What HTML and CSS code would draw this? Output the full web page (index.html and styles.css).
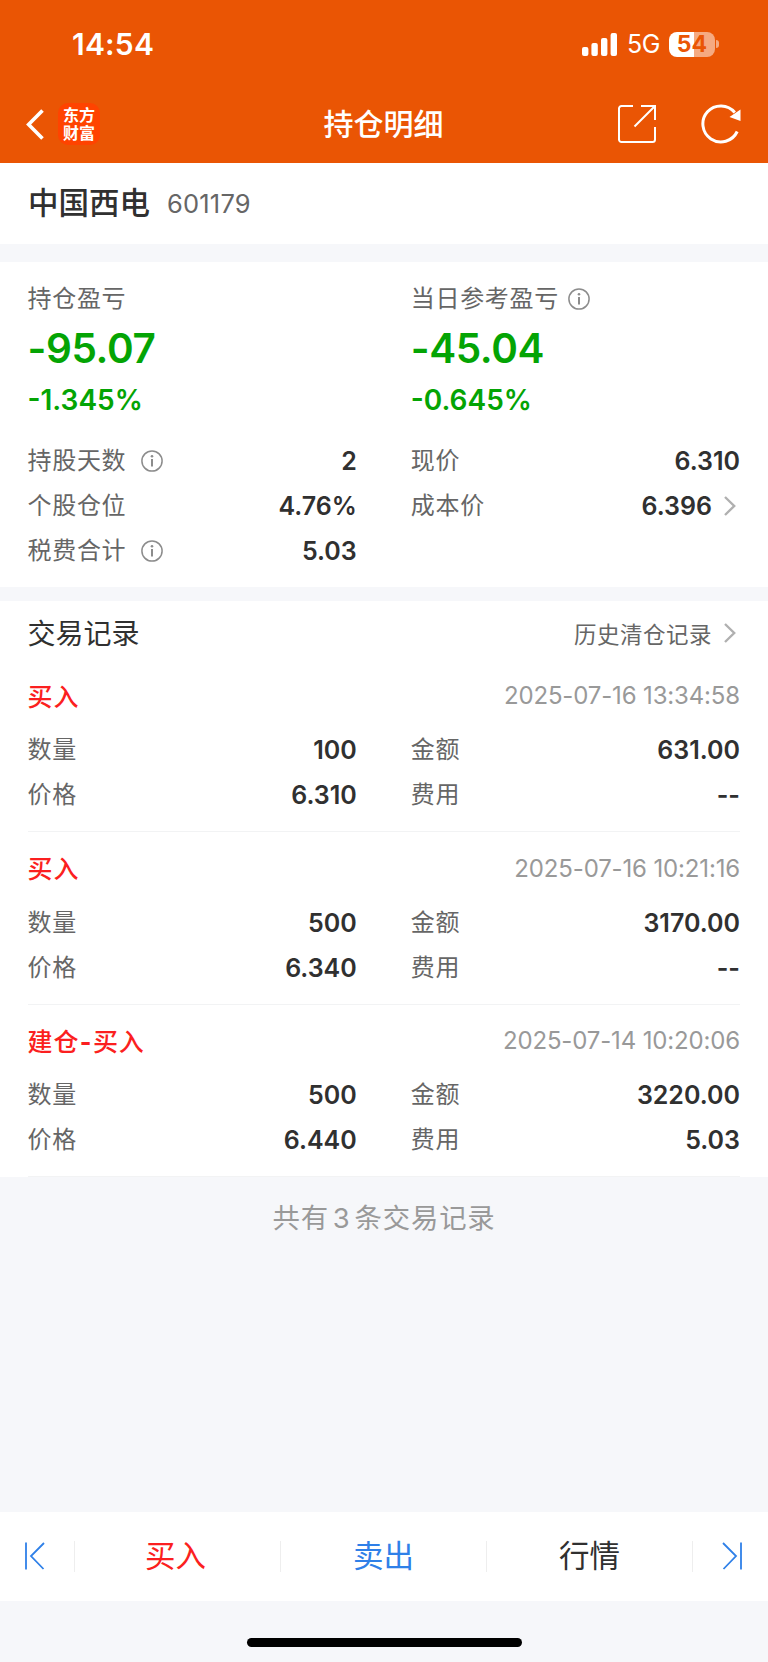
FILE: index.html
```html
<!DOCTYPE html>
<html lang="zh-CN">
<head>
<meta charset="utf-8">
<title>持仓明细</title>
<link rel="stylesheet" href="styles.css">
</head>
<body>
<svg class="defs" width="0" height="0" aria-hidden="true">
  <symbol id="info" viewBox="0 0 22 22"><circle cx="11" cy="11" r="10.1" fill="none" stroke="#8c8c8c" stroke-width="1.5"/><path d="M11 9v7.4" stroke="#8c8c8c" stroke-width="2"/><circle cx="11" cy="6.2" r="1.3" fill="#8c8c8c"/></symbol>
  <symbol id="more" viewBox="0 0 12 20"><path d="M1 1l9.2 9L1 19" fill="none" stroke="#b0b0b0" stroke-width="2.4"/></symbol>
</svg>
<header class="header">
  <div class="status">
    <span class="time">14:54</span>
    <div class="status-right">
      <svg class="signal" width="36" height="23" viewBox="0 0 36 23" fill="#fff"><rect x="0" y="14" width="6.4" height="9" rx="2"/><rect x="9.4" y="10" width="6.4" height="13" rx="2"/><rect x="19" y="5" width="6.4" height="18" rx="2"/><rect x="28.6" y="0" width="6.4" height="23" rx="2"/></svg>
      <span class="network">5G</span>
      <span class="battery">54</span>
      <i class="battery-cap"></i>
    </div>
  </div>
  <nav class="nav">
    <div class="nav-left">
      <svg width="18" height="31" viewBox="0 0 18 31"><path d="M16.500 1.400L2.600 15.500l13.900 14.100" fill="none" stroke="#fff" stroke-width="3.600"/></svg>
      <div class="logo"><span>东方</span><span>财富</span></div>
    </div>
    <h1 class="title">持仓明细</h1>
    <div class="nav-right">
      <svg width="38" height="38" viewBox="0 0 38 38" fill="none" stroke="#fff" stroke-width="2"><path d="M15 1H3.500a2.500 2.500 0 0 0-2.500 2.500v31A2.500 2.500 0 0 0 3.500 37h31a2.500 2.500 0 0 0 2.500-2.500V22M23 1H37V15M36.500 1.500L16.500 21.500"/></svg>
      <svg width="40" height="40" viewBox="0 0 40 40"><path d="M36.200 27.500A18 18 0 1 1 33.800 8.500" fill="none" stroke="#fff" stroke-width="3"/><path d="M39.500 5.500V17L28.500 13z" fill="#fff"/></svg>
    </div>
  </nav>
</header>

<section class="stock"><h2 class="stock-name">中国西电</h2><span class="stock-code">601179</span></section>

<section class="summary">
  <div class="column">
    <div class="label">持仓盈亏</div>
    <div class="amount">-95.07</div>
    <div class="percent">-1.345%</div>
    <div class="row"><span class="label">持股天数<svg class="info spaced"><use href="#info"/></svg></span><b>2</b></div>
    <div class="row"><span class="label">个股仓位</span><b>4.76%</b></div>
    <div class="row"><span class="label">税费合计<svg class="info spaced"><use href="#info"/></svg></span><b>5.03</b></div>
  </div>
  <div class="column">
    <div class="label">当日参考盈亏<svg class="info"><use href="#info"/></svg></div>
    <div class="amount">-45.04</div>
    <div class="percent">-0.645%</div>
    <div class="row"><span class="label">现价</span><b>6.310</b></div>
    <div class="row"><span class="label">成本价</span><b>6.396<svg class="more"><use href="#more"/></svg></b></div>
  </div>
</section>

<section class="records">
  <div class="records-head"><h3>交易记录</h3><a class="history">历史清仓记录<svg class="more"><use href="#more"/></svg></a></div>
  <article class="record">
    <div class="record-head"><span class="type">买入</span><time>2025-07-16 13:34:58</time></div>
    <div class="fields">
      <div class="row"><span class="label">数量</span><b>100</b></div><div class="row"><span class="label">金额</span><b>631.00</b></div>
      <div class="row"><span class="label">价格</span><b>6.310</b></div><div class="row"><span class="label">费用</span><b>--</b></div>
    </div>
  </article>
  <article class="record">
    <div class="record-head"><span class="type">买入</span><time>2025-07-16 10:21:16</time></div>
    <div class="fields">
      <div class="row"><span class="label">数量</span><b>500</b></div><div class="row"><span class="label">金额</span><b>3170.00</b></div>
      <div class="row"><span class="label">价格</span><b>6.340</b></div><div class="row"><span class="label">费用</span><b>--</b></div>
    </div>
  </article>
  <article class="record">
    <div class="record-head"><span class="type">建仓<span class="dash">-</span>买入</span><time>2025-07-14 10:20:06</time></div>
    <div class="fields">
      <div class="row"><span class="label">数量</span><b>500</b></div><div class="row"><span class="label">金额</span><b>3220.00</b></div>
      <div class="row"><span class="label">价格</span><b>6.440</b></div><div class="row"><span class="label">费用</span><b>5.03</b></div>
    </div>
  </article>
</section>
<p class="total">共有<span class="count">3</span>条交易记录</p>

<footer class="footer">
  <div class="tabs">
    <div class="tab edge first"><svg width="20" height="28" viewBox="0 0 20 28" fill="none" stroke="#2f80e8" stroke-width="1.800"><path d="M1 .5v27M19 1L6 14l12.500 13"/></svg></div>
    <div class="tab buy"><span>买入</span></div>
    <div class="tab sell"><span>卖出</span></div>
    <div class="tab quote"><span>行情</span></div>
    <div class="tab edge last"><svg width="20" height="28" viewBox="0 0 20 28" fill="none" stroke="#2f80e8" stroke-width="1.800"><path d="M19 .5v27M1 1l13 13L1.500 27"/></svg></div>
  </div>
  <div class="home"></div>
</footer>
</body>
</html>
```
FILE: styles.css
```css
* { box-sizing: border-box; }
body {
  margin: 0;
  width: 768px;
  height: 1662px;
  display: flex;
  flex-direction: column;
  background: #f6f7fa;
  color: #303030;
  font-family: Inter, "Noto Sans CJK SC", sans-serif;
  overflow: hidden;
}
h1, h2, h3, p { margin: 0; font-weight: 500; }
svg { display: block; flex: none; }
.defs { position: absolute; }

.header { height: 163.400px; flex: none; background: #ea5504; color: #fff; }
.status { height: 88px; padding: 0 49px 0 72px; display: flex; align-items: center; justify-content: space-between; }
.time { font-size: 30px; font-weight: 600; line-height: 40px; letter-spacing: 0.200px; }
.status-right { display: flex; align-items: center; }
.network { margin-left: 9px; font-size: 25px; line-height: 30px; width: 34px; letter-spacing: -0.5px; }
.battery {
  margin-left: 8px; width: 46px; height: 25px; border-radius: 8px;
  background: linear-gradient(90deg, #fff 25px, #f5aa82 25px);
  color: #ea5504; font-size: 23px; font-weight: 700; line-height: 25px; text-align: center;
}
.battery-cap { width: 3px; height: 8px; margin-left: 1px; border-radius: 0 3px 3px 0; background: #f5aa82; }

.nav { height: 72px; padding: 0 27px 0 26px; display: grid; grid-template-columns: 1fr auto 1fr; align-items: center; }
.nav-left { display: flex; align-items: center; gap: 14px; }
.logo {
  width: 42px; height: 42px; border-radius: 10px; background: #ff4300;
  display: flex; flex-direction: column; align-items: center; justify-content: center;
  font-size: 16px; font-weight: 700; line-height: 18px;
}
.title { font-size: 30px; line-height: 40px; }
.nav-right { display: flex; justify-content: flex-end; align-items: center; gap: 45px; }

.stock { height: 80.600px; flex: none; background: #fff; padding: 0 28px 1px; display: flex; align-items: center; gap: 17px; }
.stock-name { font-size: 30.500px; line-height: 40px; }
.stock-code { color: #666; font-size: 25.500px; letter-spacing: 0.200px; }

.summary {
  margin-top: 18px; height: 325px; flex: none; padding: 19px 28px 0 27.500px;
  background: #fff; display: grid; grid-template-columns: 1fr 1fr; column-gap: 54px; align-items: start;
}
.label { display: flex; align-items: center; color: #666; font-size: 24px; line-height: 36px; letter-spacing: 0.700px; }
.info { width: 22px; height: 22px; margin-left: 9px; }
.info.spaced { margin-left: 15px; }
.amount { color: #04a404; font-size: 40.500px; font-weight: 600; line-height: 63px; letter-spacing: -0.400px; }
.percent { color: #04a404; font-size: 28px; font-weight: 600; line-height: 41px; margin-bottom: 18px; }
.row { height: 45px; display: flex; align-items: center; justify-content: space-between; }
.row b { display: flex; align-items: center; font-size: 25px; font-weight: 600; line-height: 36px; }
.more { width: 12px; height: 20px; margin: 0 4px 0 12px; }

.records { margin-top: 14px; height: 576px; flex: none; padding: 0 28px 0 27.500px; background: #fff; }
.records-head { height: 59px; padding-top: 8px; display: flex; align-items: center; justify-content: space-between; }
.records-head h3 { font-size: 28px; font-weight: 400; line-height: 40px; }
.history { display: flex; align-items: center; margin-bottom: 3px; color: #666; font-size: 22.500px; letter-spacing: 0.500px; }
.record { height: 172.300px; border-bottom: 1px solid #f2f3f4; padding-top: 12px; }
.record-head { height: 48px; display: flex; align-items: center; justify-content: space-between; }
.type { margin-bottom: 2px; color: #fb1f20; font-size: 25px; font-weight: 500; letter-spacing: 0.900px; }
.dash { margin: 0 0.500px; font-weight: 700; }
.record time { color: #999; font-size: 24px; letter-spacing: -0.150px; }
.fields { margin-top: 8px; display: grid; grid-template-columns: 1fr 1fr; column-gap: 54px; }

.total { margin-top: 21px; text-align: center; color: #999; font-size: 27.400px; font-weight: 400; line-height: 40px; letter-spacing: 0.800px; }
.count { margin: 0 4px; }

.footer { margin-top: auto; height: 150px; flex: none; }
.tabs { height: 88.500px; background: #fff; display: flex; align-items: center; }
.tab { flex: 1; height: 31px; display: flex; align-items: center; justify-content: center; font-size: 30.500px; border-right: 1px solid #eee; }
.tab span { padding-bottom: 4px; }
.buy span { padding-right: 4px; }
.tab.edge { flex: none; width: 75px; }
.tab.first { padding-right: 4px; }
.tab.last { border: 0; padding-left: 3px; }
.buy { color: #fb1f20; }
.sell { color: #2f80e8; }
.home { width: 275px; height: 9px; border-radius: 5px; background: #000; margin: 37px auto 0; }
```
